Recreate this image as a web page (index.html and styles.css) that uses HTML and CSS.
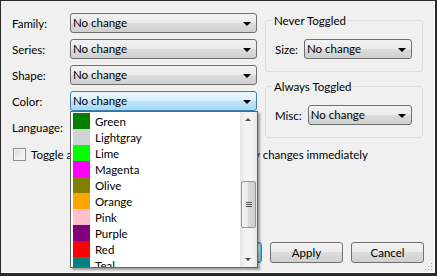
FILE: index.html
```html
<!DOCTYPE html>
<html lang="en">
<head>
  <meta charset="UTF-8" />
  <title>Text Style</title>
  <link rel="stylesheet" href="styles.css">
</head>
<body>
  <div class="frame">
    <div class="dialog">
      <div class="top">
        <div class="fields">
          <label>Family:</label>
          <div class="combo"><span>No change</span><i class="arrow"></i></div>
          <label>Series:</label>
          <div class="combo"><span>No change</span><i class="arrow"></i></div>
          <label>Shape:</label>
          <div class="combo"><span>No change</span><i class="arrow"></i></div>
          <label>Color:</label>
          <div class="combo focus"><span>No change</span><i class="arrow"></i></div>
          <label>Language:</label>
          <div class="combo"><span>No change</span><i class="arrow"></i></div>
        </div>

        <div class="groups">
          <fieldset class="group">
            <legend>Never Toggled</legend>
            <div class="group-row">
              <label>Size:</label>
              <div class="combo"><span>No change</span><i class="arrow"></i></div>
            </div>
          </fieldset>
          <fieldset class="group">
            <legend>Always Toggled</legend>
            <div class="group-row">
              <label>Misc:</label>
              <div class="combo"><span>No change</span><i class="arrow"></i></div>
            </div>
          </fieldset>
        </div>
      </div>

      <div class="checks">
        <label class="check"><span class="box"></span>Toggle all</label>
        <label class="check apply"><span class="box"></span>Apply changes immediately</label>
      </div>

      <div class="buttons">
        <button class="default">OK</button>
        <button>Apply</button>
        <button>Cancel</button>
      </div>

      <!-- open list of the Color combo -->
      <div class="popup">
        <ul class="items">
          <li><i class="swatch" style="background:#008000"></i>Green</li>
          <li><i class="swatch" style="background:#d3d3d3"></i>Lightgray</li>
          <li><i class="swatch" style="background:#00ff00"></i>Lime</li>
          <li><i class="swatch" style="background:#ff00ff"></i>Magenta</li>
          <li><i class="swatch" style="background:#808000"></i>Olive</li>
          <li><i class="swatch" style="background:#ffa500"></i>Orange</li>
          <li><i class="swatch" style="background:#ffc0cb"></i>Pink</li>
          <li><i class="swatch" style="background:#800080"></i>Purple</li>
          <li><i class="swatch" style="background:#ff0000"></i>Red</li>
          <li><i class="swatch" style="background:#008080"></i>Teal</li>
        </ul>
        <div class="scrollbar">
          <div class="sb-btn up"></div>
          <div class="sb-track">
            <div class="sb-thumb"><span></span><span></span><span></span></div>
          </div>
          <div class="sb-btn down"></div>
        </div>
      </div>

      <div class="grip"></div>
    </div>
  </div>
</body>
</html>
```

FILE: styles.css
```css
* {
  box-sizing: border-box;
}

html, body {
  margin: 0;
  width: 437px;
  height: 276px;
  overflow: hidden;
}

body {
  font-family: Lato, "Liberation Sans", sans-serif;
  font-size: 11.5px;
  color: #000;
}

.frame {
  width: 437px;
  height: 276px;
  background: #2a2a2a;
  padding: 1px 2px 3px 1px;
}

.dialog {
  position: relative;
  height: 100%;
  background: #f0f0f0;
  border-right: 1px solid #fff;
  border-bottom: 1px solid #fff;
  padding: 12px 10px 9px 11px;
  display: flex;
  flex-direction: column;
  overflow: hidden;
}

.top {
  display: flex;
  gap: 8px;
}

.fields {
  display: grid;
  grid-template-columns: 58px 187px;
  grid-auto-rows: 20px;
  row-gap: 6px;
  align-items: center;
}

.combo {
  position: relative;
  height: 20px;
  border: 1px solid #707070;
  border-radius: 3px;
  background: linear-gradient(#f2f2f2, #ebebeb 50%, #dddddd 50%, #cfcfcf);
  padding-left: 2px;
  line-height: 18px;
  white-space: nowrap;
}

.combo.focus {
  border-color: #3c7fb1;
  background: linear-gradient(#eaf6fd, #d9f0fc 50%, #bee6fd 50%, #a7d9f5);
}

.arrow {
  position: absolute;
  right: 5px;
  top: 8px;
  width: 0;
  height: 0;
  border-left: 4px solid transparent;
  border-right: 4px solid transparent;
  border-top: 4px solid #000;
}

.groups {
  width: 158px;
  display: flex;
  flex-direction: column;
  gap: 7px;
}

.group {
  margin: 0;
  border: 1px solid #d5dfe5;
  border-radius: 3px;
  padding: 11px 10px 12px 9px;
}

.group legend {
  padding: 0 2px;
  margin-left: -3px;
  line-height: 15px;
}

.group-row {
  display: flex;
  align-items: center;
  gap: 6px;
}

.group-row .combo {
  flex: 1;
}

.checks {
  display: flex;
  margin-top: 9px;
  height: 14px;
  align-items: center;
}

.check {
  display: flex;
  align-items: center;
  gap: 5px;
  margin-left: 1px;
}

.check.apply {
  margin-left: 135px;
}

.box {
  width: 13px;
  height: 13px;
  border: 1px solid #8e8f8f;
  background: linear-gradient(135deg, #dcdcdc, #fbfbfb);
  box-shadow: inset 0 0 0 1px #f4f4f4;
}

.buttons {
  margin-top: auto;
  display: flex;
  justify-content: flex-end;
  gap: 8px;
}

button {
  width: 73px;
  height: 21px;
  font: inherit;
  color: #000;
  border: 1px solid #707070;
  border-radius: 3px;
  background: linear-gradient(#f2f2f2, #ebebeb 50%, #dddddd 50%, #cfcfcf);
  padding: 0;
}

button.default {
  border-color: #3c7fb1;
  box-shadow: inset 0 0 0 1px #48d1f7;
}

.popup {
  position: absolute;
  left: 69px;
  top: 110px;
  width: 188px;
  height: 157px;
  background: #fff;
  border: 1px solid #646464;
  box-shadow: 2px 2px 2px rgba(0, 0, 0, 0.35);
  display: flex;
  overflow: hidden;
}

.items {
  list-style: none;
  margin: 0;
  padding: 1px 0 0 2px;
  flex: 1;
}

.items li {
  height: 16px;
  display: flex;
  align-items: center;
  gap: 5px;
  white-space: nowrap;
}

.swatch {
  width: 17px;
  height: 16px;
}

.scrollbar {
  width: 17px;
  display: flex;
  flex-direction: column;
  background: linear-gradient(90deg, #e6e6e6, #f4f4f4 30%, #f4f4f4 70%, #e6e6e6);
}

.sb-btn {
  height: 17px;
  position: relative;
}

.sb-btn::after {
  content: "";
  position: absolute;
  left: 5px;
  width: 0;
  height: 0;
  border-left: 3px solid transparent;
  border-right: 3px solid transparent;
}

.sb-btn.up::after {
  top: 6px;
  border-bottom: 3px solid #4d4d4d;
}

.sb-btn.down::after {
  top: 8px;
  border-top: 3px solid #4d4d4d;
}

.sb-track {
  flex: 1;
  padding-top: 52px;
}

.sb-thumb {
  height: 47px;
  margin: 0 1px;
  border: 1px solid #979797;
  border-radius: 2px;
  background: linear-gradient(90deg, #f4f4f4, #e8e8e8 50%, #d8d8d8 50%, #cfcfcf);
  display: flex;
  flex-direction: column;
  align-items: center;
  justify-content: center;
  gap: 1px;
}

.sb-thumb span {
  width: 6px;
  height: 1px;
  background: #555;
}

.grip {
  position: absolute;
  right: 2px;
  bottom: 2px;
  width: 8px;
  height: 8px;
  background: radial-gradient(circle, #b0b0b0 0.8px, transparent 1px) 0 0 / 3px 3px;
  clip-path: polygon(100% 0, 100% 100%, 0 100%);
}
```
